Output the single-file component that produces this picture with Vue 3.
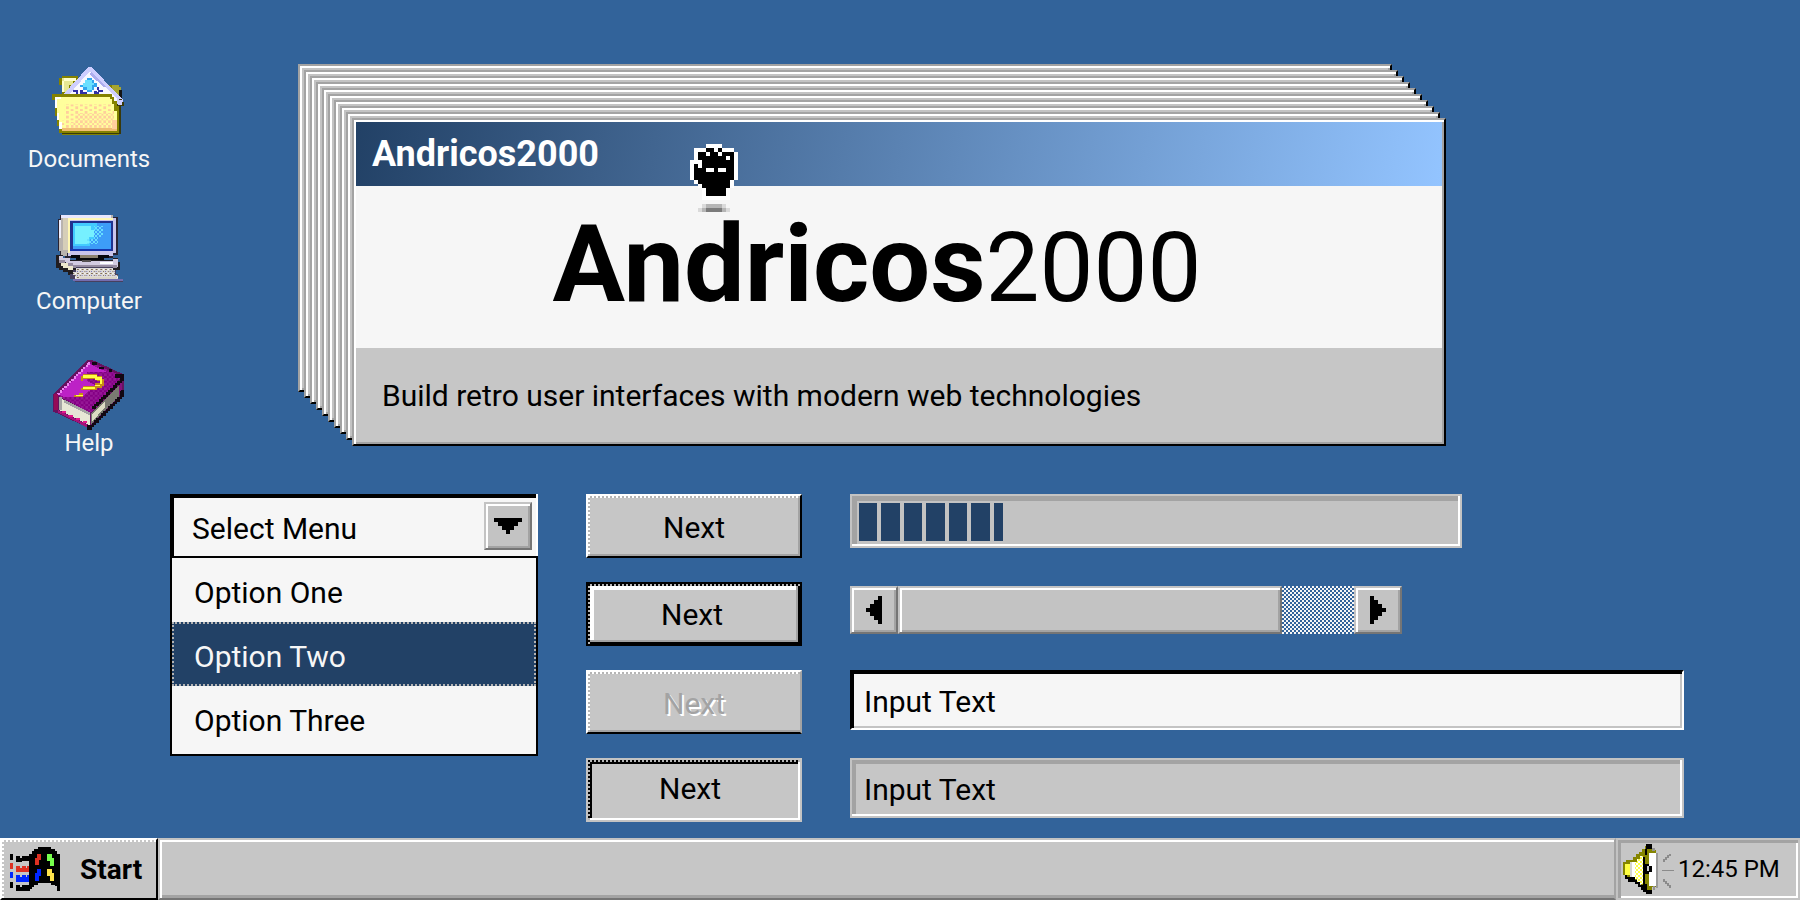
<script setup>
import { ref } from 'vue'

const layers = Array.from({ length: 9 }, (_, i) => (9 - i) * 6)
const choice = ref('Select Menu')
const active = ref('Option Two')
const options = ['Option One', 'Option Two', 'Option Three']
const first = ref('Input Text')
const second = ref('Input Text')

function cells(rows, palette) {
  const out = []
  rows.forEach((row, y) => {
    let x = 0
    while (x < row.length) {
      let w = 1
      while (row[x + w] === row[x]) w++
      if (palette[row[x]]) out.push({ x, y, w, fill: palette[row[x]] })
      x += w
    }
  })
  return out
}

const fist = cells(
  [
    '....wwww....',
    '.wwwkkwkwww.',
    '.wkkwkkwkkkw',
    '.wkkkkkkkwkw',
    'wwwkkkkkkkkw',
    'wkwkkkkkkkkw',
    'wkkkwwkwwkkw',
    'wkkkkkkkkkkw',
    'wkkkkkkkkkkw',
    '.wkkkkkkkkw.',
    '..wkkkkkkkw.',
    '...wkkkkkw..',
    '...wkkkkkw..',
    '...wwwwwww..'
  ],
  { w: '#fff', k: '#000' }
)
</script>

<template>
  <div class="screen">
    <main class="desktop">
      <nav class="icons" aria-label="Desktop">
        <a href="#documents" class="shortcut">
          <svg viewBox="101 30 216 216" shape-rendering="crispEdges" aria-hidden="true">
            <defs>
              <pattern id="folder-dither" width="28" height="14" patternUnits="userSpaceOnUse">
                <rect width="28" height="14" fill="#ffff9c" />
                <path d="M0 0h7v7h-7zM14 7h7v7h-7z" fill="#ffce9c" />
              </pattern>
              <pattern id="folder-dense" width="14" height="14" patternUnits="userSpaceOnUse">
                <rect width="14" height="14" fill="#ffff9c" />
                <path d="M0 0h7v7h-7zM7 7h7v7h-7z" fill="#ffce9c" />
              </pattern>
            </defs>
            <path d="M120 70h7v-7h49v7h7v20h115v7h7v132h-7v10H127V90h-7z" fill="#848200" />
            <path d="M127 70h42v7h-7v14h-14v20h-21z" fill="#e7e794" />
            <path d="M127 77h7v-7h35v7h-35v34h-7z" fill="#ffffce" />
            <path d="M278 90h21v7h7v24h-28z" fill="#a5a531" />
            <path d="M300 104h8v28h-8z" fill="#151515" />
            <path d="M132 118L206 37h12L310 134v12l-12 14-20-16v-26z" fill="#ceceff" />
            <path d="M150 118L209 51h6L303 142v8l-9 3-36-35z" fill="#f8f8ff" />
            <path d="M218 51L262 97h-8L211 58z" fill="#adadef" />
            <path d="M183 90h7v-7h7v-7h7v-7h14v7h7v7h7v14h-7v7h-7v7h-14v-7h-14v-7h-7z" fill="#31a5ef" />
            <path d="M190 83h7v-7h21v7h7v7h-7v14h-14v-7h-14z" fill="#6bdfff" />
            <path d="M162 104h14v14h-7v-7h-7zM183 104h7v7h14v7h-21zM232 97h7v7h11v7h-14v-7h-4zM225 107h7v4h7v7h-14z" fill="#3131a5" />
            <path d="M299 132h9v8h5v14h-7v83H127v-8h170v-76h-6z" fill="#39390a" />
            <path d="M295 150h12v-14h-8v-8h-7z" fill="#ceceff" />
            <path d="M99 118h179v7h7v14h7v14h7v80H120v-21h-7v-28h-7v-49h-7z" fill="#848200" />
            <path d="M106 125h165v7h7v14h7v21h7v55H127v-14h-7v-28h-7v-35h-7z" fill="#ffff9c" />
            <path d="M134 146h144v21h7v55H127v-28h7z" fill="url(#folder-dither)" />
            <path d="M176 174h109v48H155v-20h21z" fill="url(#folder-dense)" />
            <path d="M106 125h20v7h-13v42h7v28h7v20h-7v-28h-7v-35h-7z" fill="#fff" />
            <path d="M127 220h165v7h-165z" fill="#efbd73" />
            <path d="M278 194h14v28h-14z" fill="#ffce9c" />
          </svg>
          <span>Documents</span>
        </a>
        <a href="#computer" class="shortcut">
          <svg viewBox="96 6 216 216" shape-rendering="crispEdges" aria-hidden="true">
            <defs>
              <pattern id="keys" width="14" height="12" patternUnits="userSpaceOnUse">
                <rect width="14" height="12" fill="#dedad6" />
                <path d="M0 0h5v4h-5zM7 6h5v4h-5z" fill="#806c58" />
                <path d="M7 0h4v4h-4z" fill="#fff" />
                <path d="M0 6h4v4h-4z" fill="#7777bd" />
              </pattern>
              <pattern id="glow" width="12" height="12" patternUnits="userSpaceOnUse">
                <path d="M0 0h6v6h-6zM6 6h6v6h-6z" fill="#67dfff" />
              </pattern>
            </defs>
            <path d="M118 30h158v7h14v113h-14v8H132v-6h-14v-14h-7V42h7z" fill="#292433" />
            <path d="M120 31h155v9H145v104h-7v8h-18v-14h-7V44h7z" fill="#b9b3ae" />
            <path d="M120 31h149v7H120z" fill="#e7e7ff" />
            <path d="M127 38h14v98h-14z" fill="#d6ceb8" />
            <path d="M113 46h7v52h-7z" fill="#efefff" />
            <path d="M141 39h143v106h-7v7H141z" fill="#c9c5ec" />
            <path d="M141 39h136v7H148v98h-7z" fill="#fff7b5" />
            <path d="M148 49h128v88H148z" fill="#20328f" />
            <path d="M155 55h115v76H155z" fill="#3d9df8" />
            <path d="M155 55h72v20h-7v28h-14v21h-51z" fill="#42cbff" />
            <path d="M162 62h49v14h7v20h-14v20h-42z" fill="#76f0ff" />
            <path d="M218 62h28v35h-14v20h-35v-14h21z" fill="url(#glow)" />
            <path d="M148 131h122v6H148z" fill="#1635ad" />
            <path d="M150 151h114v7h-14v7h-84v-7h-16z" fill="#06070c" />
            <path d="M176 151h56v8h-56z" fill="#8c8270" />
            <path d="M106 151h20v7h20v7h130v-7h14v14h7v22h-14v22H155v-7h-14v-7h-14v-7h-14v-7h-7z" fill="#211d20" />
            <path d="M113 154h13v6h20v7h130v-6h14v24H155v-7h-21v-8h-21z" fill="#d3cbe1" />
            <path d="M113 166h20v7h22v8h134v7H148v-6h-21v-7h-14z" fill="#978ca0" />
            <path d="M120 175h21v7h14v14h-14v-7h-14v-7h-7z" fill="#eee8ce" />
            <path d="M236 171h40v6h-40z" fill="#fff" />
            <path d="M183 165h28v7h-28z" fill="#565051" />
            <path d="M164 187h112v7h8v14h7v14h14v10H162v-10h-14v-14h7v-14h9z" fill="#47405f" />
            <path d="M164 188h112v7h7v14h7v12h-128v-10h-7v-9h9z" fill="url(#keys)" />
            <path d="M155 222h150v6H155z" fill="#756dae" />
            <path d="M176 216h108v6H176z" fill="#dad4c7" />
          </svg>
          <span>Computer</span>
        </a>
        <a href="#help" class="shortcut">
          <svg viewBox="99 -3 216 216" shape-rendering="crispEdges" aria-hidden="true">
            <defs>
              <pattern id="cover" width="14" height="14" patternUnits="userSpaceOnUse">
                <rect width="14" height="14" fill="#840084" />
                <path d="M0 0h7v7h-7zM7 7h7v7h-7z" fill="#951795" />
              </pattern>
            </defs>
            <path d="M203 30h14l96 44v62L217 233h-14L99 184v-52z" fill="#65125f" />
            <path d="M206 37h10l90 42L216 186h-10L112 136z" fill="url(#cover)" />
            <path d="M206 40l52 25h-58v27l26 14-40 36h-50l-18-8z" fill="#bd21c6" />
            <path d="M203 37h7v7h-7v7h-7v7h-7v7h-7v7h-7v7h-7v7h-7v7h-7v7h-7v7h-7v7h-7v7h-7v7h-7v7h-7v-7h7v-7h7v-7h7v-7h7v-7h7v-7h7v-7h7v-7h7v-7h7v-7h7v-7h7v-7h7z" fill="#ee83f4" />
            <path d="M116 142l94 46v38l-94-47z" fill="#e7e7d6" />
            <path d="M118 142h9v38h-9zM132 149l78 38v9l-78-38z" fill="#a5a5a5" />
            <path d="M213 190l84-84v34l-84 84z" fill="#7a7a72" />
            <path d="M217 194l38-38v17l-38 40z" fill="#dcdcc2" />
            <path d="M101 132h12v48h-12z" fill="#950b56" />
            <path d="M113 179l98 49-8 5-90-46z" fill="#a3127a" />
            <path d="M127 184h12v6h-12zM148 194h12v6h-12zM169 204h12v6h-12zM190 214h12v6h-12z" fill="#e3188c" />
            <path d="M298 100h7v36h-7z" fill="#84107c" />
            <path d="M217 37h14v7h-14zM238 51h14v7h-14zM266 58h10v7h-10zM285 72h28v20h-7v7h-7v7h-7v7h-7v7h-7v7h-7v7h-7v7h-7v7h-7v7h-7v7h-7v7h-7v7h-14v-7h7v-7h7v-7h7v-7h7v-7h7v-7h7v-7h7v-7h7v-7h7v-7h7v-7h7v-7h7v-7h-14zM302 121h11v20h-7v7h-7v7h-7v7h-7v7h-7v7h-7v7h-7v7h-7v7h-7v7h-7v7h-7v7h-7v7h-7v7h-7v7h-14v-14h14v-7h7v-7h7v-7h7v-7h7v-7h7v-7h7v-7h7v-7h7v-7h7v-7h7v-7h7v-7h7z" fill="#120712" />
            <path d="M183 79h7v-7h42v7h14v7h7v21h-7v7h-14v7h-49v-7h7v-7h35v-7h14v-7h-7v-7h-42v7h-7zM162 135h14v-6h14v11h-28z" fill="#c78a16" />
            <path d="M190 74h42v7h14v21h-7v7h-14v7h-35v-5h35v-7h14v-14h-14v-7h-35zM167 134h21v5h-21z" fill="#ffff42" />
          </svg>
          <span>Help</span>
        </a>
      </nav>

      <div class="workspace">
        <section class="hero">
          <div
            v-for="offset in layers"
            :key="offset"
            class="layer"
            :style="{ top: 54 - offset + 'px', left: 54 - offset + 'px', right: offset + 'px', bottom: offset + 'px' }"
          ></div>
          <article class="window">
            <header class="titlebar">Andricos2000</header>
            <h1 class="brand"><b>Andricos</b><span>2000</span></h1>
            <p class="tagline">Build retro user interfaces with modern web technologies</p>
            <svg class="fist" viewBox="0 0 12 18" shape-rendering="crispEdges" aria-hidden="true">
              <rect v-for="(c, i) in fist" :key="i" :x="c.x" :y="c.y" :width="c.w" height="1" :fill="c.fill" />
              <path d="M3 15h6v1h-6zM2 16h8v1h-8z" fill="#dadada" />
              <path d="M4 15h4v1h-4zM3 16h6v1h-6z" fill="#b5b5b5" />
              <path d="M4 16h4v1h-4z" fill="#7b7b7b" />
            </svg>
          </article>
        </section>

        <section class="controls">
          <div class="menu">
            <div class="combo">
              <select v-model="choice" aria-label="Select Menu">
                <option>Select Menu</option>
                <option v-for="o in options" :key="o">{{ o }}</option>
              </select>
              <span class="drop">
                <svg viewBox="0 0 7 4" shape-rendering="crispEdges" aria-hidden="true">
                  <path d="M0 0h7v1H6v1H5v1H4v1H3V3H2V2H1V1H0z" />
                </svg>
              </span>
            </div>
            <div class="options" role="listbox" aria-label="Options">
              <button
                v-for="o in options"
                :key="o"
                type="button"
                role="option"
                class="option"
                :class="{ active: o === active }"
                :aria-selected="o === active"
                @click="active = o"
              >{{ o }}</button>
            </div>
          </div>

          <div class="buttons">
            <button type="button" class="btn raised">Next</button>
            <button type="button" class="btn focused">Next</button>
            <button type="button" class="btn disabled" disabled>Next</button>
            <button type="button" class="btn pressed">Next</button>
          </div>

          <div class="fields">
            <div class="progress" role="progressbar" aria-label="Progress" aria-valuenow="24" aria-valuemin="0" aria-valuemax="100">
              <div class="fill">
                <i v-for="n in 7" :key="n"></i>
              </div>
            </div>
            <div class="scroll">
              <button type="button" class="bevel arrow" aria-label="Scroll left">
                <svg viewBox="0 0 4 7" shape-rendering="crispEdges" aria-hidden="true">
                  <path d="M4 0v7H3V6H2V5H1V4H0V3h1V2h1V1h1V0z" />
                </svg>
              </button>
              <div class="bevel thumb"></div>
              <div class="track"></div>
              <button type="button" class="bevel arrow" aria-label="Scroll right">
                <svg viewBox="0 0 4 7" shape-rendering="crispEdges" aria-hidden="true">
                  <path d="M0 0v7h1V6h1V5h1V4h1V3H3V2H2V1H1V0z" />
                </svg>
              </button>
            </div>
            <input v-model="first" class="text" type="text" aria-label="Text" />
            <input v-model="second" class="text muted" type="text" aria-label="Muted text" />
          </div>
        </section>
      </div>
    </main>

    <footer class="taskbar">
      <button type="button" class="start">
        <svg viewBox="24 57 162 144" shape-rendering="crispEdges" aria-hidden="true">
          <path d="M114 64h39v6h12v6h6v7h9v112h-9v-14h-6v-5h-12v-5h-39v6h-12v6h-6v6h-6v6H48v-19h12v6h6v-6h22v-70H66v6h-6v6H48V90h12v6h6v-6h22v-7h8v-7h6v-6h12z" />
          <path d="M30 83h9v18h-9zM30 167h9v19h-9z" />
          <path d="M30 111h9v17h-9z" fill="#dd3022" />
          <path d="M30 139h9v18h-9z" fill="#0026ff" />
          <path d="M48 120h12v6h6v-6h22v18H48z" fill="#dd3022" />
          <path d="M60 120h6v6h-6zM78 120h4v6h-4z" fill="#c6c6c6" />
          <path d="M48 148h12v6h6v-6h22v19H48z" fill="#0026ff" />
          <path d="M60 148h6v6h-6zM78 148h4v6h-4zM48 138h38v10H48z" fill="#c6c6c6" />
          <path d="M48 108h38v12H48z" fill="#c6c6c6" />
          <path d="M48 167h38v10H66v6h-6v-6H48z" fill="#c6c6c6" />
          <path d="M111 83h12v20h-6v15h-12V95h6z" fill="#dd3022" />
          <path d="M142 83h13v12h6v24h-12v-14h-7z" fill="#77ff4c" />
          <path d="M111 129h12v20h-6v16h-12v-24h6z" fill="#0026ff" />
          <path d="M142 129h13v12h6v24h-12v-14h-7z" fill="#ffe34c" />
        </svg>
        Start
      </button>
      <div class="tasks"></div>
      <div class="tray">
        <svg viewBox="96 51 162 162" shape-rendering="crispEdges" aria-hidden="true">
          <defs>
            <pattern id="cone" width="12" height="12" patternUnits="userSpaceOnUse">
              <rect width="12" height="12" fill="#ffff4a" />
              <path d="M0 0h6v6h-6zM6 6h6v6h-6z" fill="#fff" />
            </pattern>
          </defs>
          <path d="M168 58h18v18h11v110h-11v18h-18v-10h-8v-8h-8v-8h-9v-9h-9v-8h-26v-11h-8v-38h8v-8h20v-8h10v-8h9v-8h9v-8h8v-8h4z" fill="#858500" />
          <path d="M178 84h19v98h-19z" fill="#fff" />
          <path d="M198 84h7v104h-7z" fill="#9c9c9c" />
          <path d="M134 110h8v-8h8v-8h8v84h-8v-8h-8v-8h-8z" fill="url(#cone)" />
          <path d="M106 116h14v34h-14z" fill="#ffff42" />
          <path d="M120 110h14v46h-14z" fill="#d6d6cf" />
          <path d="M126 110h8v46h-8z" fill="#fff" />
          <path d="M104 150h8v6h22v8h8v8h9v8h8v8h9v8h18v10h-18v-4h-8v-8h-8v-8h-9v-8h-8v-8h-22v-8h-9zM168 58h18v14h-14v18h-6v26h10v6h10v18h-10v8h-10v28h6v18h-14V96h6V72h4z" />
          <path d="M172 124h6v14h-6z" fill="#c9c9c9" />
          <path d="M187 68h9v9h-9zM188 184h8v10h-8z" fill="#929292" />
          <path d="M216 134h36v5h-36zM218 103h6v7h-6zM224 97h6v7h-6zM231 91h6v7h-6zM237 86h6v6h-6zM218 163h6v7h-6zM224 169h6v7h-6zM231 175h6v7h-6zM237 181h6v7h-6z" fill="#8b8b8b" />
        </svg>
        <time datetime="12:45">12:45 PM</time>
      </div>
    </footer>
  </div>
</template>

<style>
body {
  margin: 0;
  background: #32639a;
}
</style>

<style scoped>
.screen {
  display: flex;
  flex-direction: column;
  min-height: 100vh;
  background: #32639a;
  color: #000;
  font-family: Roboto, "Liberation Sans", sans-serif;
  font-size: 30px;
}
.screen *,
.screen *::before {
  box-sizing: border-box;
}
button,
input,
select {
  margin: 0;
  border: 0;
  border-radius: 0;
  font: inherit;
  color: inherit;
}
.desktop {
  flex: 1;
  display: grid;
  grid-template-columns: 170px 1fr;
  padding: 64px 116px 16px 0;
}
.icons {
  display: flex;
  flex-direction: column;
  gap: 30px;
  padding: 1px 8px 0 0;
}
.shortcut {
  display: flex;
  flex-direction: column;
  align-items: center;
  gap: 4px;
  padding-left: 16px;
  color: #f6f6f6;
  font-size: 24px;
  line-height: 36px;
  text-decoration: none;
}
.shortcut svg {
  width: 72px;
  height: 72px;
  overflow: visible;
}

.hero {
  position: relative;
  margin: 0 238px 48px 128px;
  padding: 54px 0 0 54px;
}
.layer,
.window {
  background: #c3c3c3;
  border: 2px solid;
  border-color: #a3a3a3 #000 #000 #a3a3a3;
  box-shadow: inset 2px 2px #fff, inset -2px -2px #a3a3a3;
}
.layer {
  position: absolute;
}
.window {
  position: relative;
  padding: 2px;
  background: #c6c6c6;
}
.titlebar {
  height: 64px;
  padding-left: 16px;
  background: linear-gradient(100deg, #224166, #93c4ff);
  color: #fff;
  font-size: 36px;
  font-weight: 700;
  line-height: 64px;
}
.brand {
  margin: 0;
  padding-right: 44px;
  height: 162px;
  background: #f6f6f6;
  font-size: 108px;
  font-weight: 400;
  line-height: 156px;
  text-align: center;
}
.brand span {
  font-size: 96px;
}
.tagline {
  margin: 0;
  padding: 2px 26px 0;
  line-height: 92px;
}
.fist {
  position: absolute;
  left: 336px;
  top: 24px;
  width: 48px;
  height: 72px;
}

.controls {
  display: grid;
  grid-template-columns: 368px 216px 1fr;
  gap: 48px;
  align-items: start;
}
.combo {
  position: relative;
  border-right: 2px solid #fff;
}
.combo select {
  appearance: none;
  display: block;
  width: 100%;
  height: 62px;
  padding: 2px 60px 0 18px;
  background: #f6f6f6;
  border: solid #000;
  border-width: 4px 0 0 4px;
}
.drop {
  position: absolute;
  top: 8px;
  right: 4px;
  display: grid;
  place-items: center;
  width: 48px;
  height: 48px;
  pointer-events: none;
}
.drop,
.bevel {
  background: #c3c3c3;
  border: 2px solid;
  border-color: #c3c3c3 #757575 #757575 #c3c3c3;
  box-shadow: inset 2px 2px #fff, inset -2px -2px #a3a3a3;
}
.drop svg {
  width: 28px;
  height: 16px;
}
.options {
  display: flex;
  flex-direction: column;
  padding-bottom: 4px;
  background: #f6f6f6;
  border: 2px solid #000;
}
.option {
  height: 64px;
  padding: 4px 22px 0;
  background: transparent;
  text-align: left;
}
.option.active {
  background: #224166;
  color: #f6f6f6;
  outline: 2px dotted #b3b3b3;
  outline-offset: -2px;
}

.buttons {
  display: grid;
  gap: 24px;
}
.btn {
  position: relative;
  height: 64px;
  padding: 2px 0 0;
  background: #c6c6c6;
  border: 2px solid;
}
.btn::before {
  content: "";
  position: absolute;
  inset: 0;
  background:
    repeating-linear-gradient(90deg, var(--dot) 0 2px, #b5b5b5 2px 4px) top / 100% 2px no-repeat,
    repeating-linear-gradient(var(--dot) 0 2px, #b5b5b5 2px 4px) left / 2px 100% no-repeat;
}
.raised {
  --dot: #fff;
  border-color: #fff #000 #000 #fff;
  box-shadow: inset -2px -2px #a3a3a3;
}
.focused {
  --dot: #000;
  padding: 0 4px 0 0;
  border-color: #000;
  box-shadow: inset -2px -2px #000, inset -4px -4px #a3a3a3, inset 6px 6px #fff;
}
.disabled {
  --dot: #fff;
  color: #a3a3a3;
  border-color: #fff #a3a3a3 #000 #fff;
  box-shadow: inset 0 -2px #a3a3a3;
  text-shadow: 2px 2px #fff;
}
.pressed {
  --dot: #000;
  padding: 0 8px 4px 0;
  border-color: #c3c3c3;
  box-shadow: inset -2px -2px #fff, inset 4px 4px #000;
}

.fields {
  display: flex;
  flex-direction: column;
}
.progress {
  max-width: 612px;
  width: 100%;
  height: 54px;
  padding: 7px;
  background: #c3c3c3;
  border: 2px solid #c3c3c3;
  box-shadow: inset -2px -2px #fff, inset 5px 5px #a3a3a3;
}
.fill {
  display: flex;
  gap: 4px;
  width: 144px;
  height: 38px;
}
.fill i {
  flex: 2;
  background: #224166;
}
.fill i:last-child {
  flex: 1;
}
.scroll {
  display: flex;
  max-width: 552px;
  width: 100%;
  height: 48px;
  margin: 38px 0 36px;
}
.arrow {
  display: grid;
  place-items: center;
  width: 48px;
  padding: 0;
}
.arrow svg {
  width: 16px;
  height: 28px;
}
.thumb {
  flex: 1;
}
.track {
  width: 72px;
  background: repeating-conic-gradient(#f6f6f6 0 25%, #32639a 0 50%) 0 0 / 4px 4px;
}
.text {
  width: 100%;
  height: 60px;
  padding: 2px 12px 0;
  background: #f6f6f6;
  border: 2px solid;
  border-color: #000 #fff #fff #000;
  box-shadow: inset 2px 2px #000, inset -2px -2px #c3c3c3;
}
.muted {
  margin-top: 28px;
  background: #c6c6c6;
  border-color: #c3c3c3;
  box-shadow: inset -2px -2px #fff, inset 4px 4px #a3a3a3;
}

.taskbar {
  display: flex;
  height: 62px;
  background: #c6c6c6;
}
.start {
  position: relative;
  display: flex;
  align-items: center;
  gap: 18px;
  width: 158px;
  padding: 0 0 0 6px;
  background: #c6c6c6;
  border: 2px solid;
  border-color: #fff #000 #000 #fff;
  font-size: 28px;
  font-weight: 700;
}
.start::before {
  content: "";
  position: absolute;
  inset: 0;
  border: dotted #fff;
  border-width: 2px 0 0 2px;
}
.start svg {
  width: 54px;
  height: 48px;
}
.tasks {
  flex: 1;
  border: 2px solid;
  border-color: #c3c3c3 #a3a3a3 #757575 #c3c3c3;
  box-shadow: inset 2px 2px #fff, inset 0 -3px #a3a3a3;
}
.tray {
  display: flex;
  align-items: center;
  gap: 2px;
  width: 184px;
  padding-left: 4px;
  border: 2px solid #c3c3c3;
  box-shadow: inset 3px 3px #a3a3a3, inset -2px -2px #fff;
  font-size: 24px;
}
.tray svg {
  width: 54px;
  height: 54px;
}
</style>
